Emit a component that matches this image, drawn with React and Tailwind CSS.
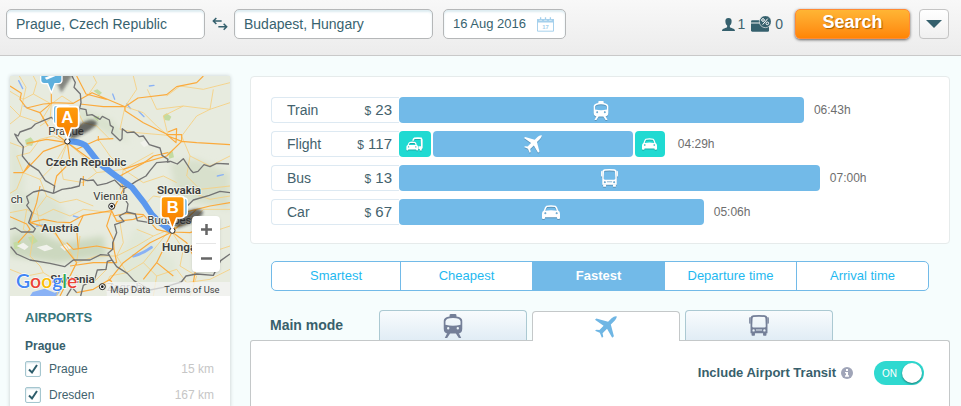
import React, { useState } from 'react';

const trips = [
    { name: 'Train', price: 23, time: '06:43h', legs: [{ icon: 'train', width: '76.4%' }] },
    {
        name: 'Flight',
        price: 117,
        time: '04:29h',
        legs: [
            { icon: 'transfer', width: '6%', transfer: true },
            { icon: 'plane', width: '37.7%' },
            { icon: 'taxi', width: '5.7%', transfer: true },
        ],
    },
    { name: 'Bus', price: 13, time: '07:00h', legs: [{ icon: 'bus', width: '79.4%' }] },
    { name: 'Car', price: 67, time: '05:06h', legs: [{ icon: 'car', width: '57.5%' }] },
];

const sortOptions = ['Smartest', 'Cheapest', 'Fastest', 'Departure time', 'Arrival time'];

const airports = [
    { name: 'Prague', distance: '15 km' },
    { name: 'Dresden', distance: '167 km' },
];

const TrainIcon = ({ className }) => (
    <svg viewBox="0 0 58 70" className={className} fill="currentColor" aria-hidden="true">
        <path fillRule="evenodd" d="M19 7V3Q19 0 23 0H35Q39 0 39 3V7Q56 9 56 20V43Q56 57 43 57H15Q2 57 2 43V20Q2 9 19 7ZM7 31Q29 37 51 31V22Q50 12 29 12Q8 12 7 22ZM15 38A3.500 3.500 0 1 0 15 45A3.500 3.500 0 1 0 15 38ZM43 38A3.500 3.500 0 1 0 43 45A3.500 3.500 0 1 0 43 38Z" />
        <path d="M13 54L21 56L12 70H5ZM45 54L37 56L46 70H53Z" />
    </svg>
);

const PlaneIcon = ({ className }) => (
    <svg viewBox="0 0 64 64" className={className} fill="currentColor" aria-hidden="true">
        <path d="M63 1C58 0 53 3 49 6L38 17L4 7L0 11L25 28L13 41L4 40L0 43L14 49L20 63L24 60L22 50L35 37L50 63L55 59L46 25L57 14C61 10 64 4 63 1Z" />
    </svg>
);

const BusIcon = ({ className }) => (
    <svg viewBox="0 0 58 62" className={className} fill="currentColor" aria-hidden="true">
        <path fillRule="evenodd" d="M12 1Q29 -1 46 1Q53 2 54 9V54H4V9Q5 2 12 1ZM13 6Q10 7 10 11L9 33Q9 37 13 37H45Q49 37 49 33L48 11Q48 7 45 6Q29 4 13 6ZM20 43V46H38V43ZM13 42A3.500 3.500 0 1 0 13 49A3.500 3.500 0 1 0 13 42ZM45 42A3.500 3.500 0 1 0 45 49A3.500 3.500 0 1 0 45 42Z" />
        <path d="M0 10Q0 6 4 6V26H2Q0 26 0 23ZM58 10Q58 6 54 6V26H56Q58 26 58 23ZM7 53H17V59Q17 61 15 61H9Q7 61 7 59ZM41 53H51V59Q51 61 49 61H43Q41 61 41 59Z" />
    </svg>
);

const CarIcon = ({ className }) => (
    <svg viewBox="0 0 54 42" className={className} fill="currentColor" aria-hidden="true">
        <path fillRule="evenodd" d="M13 2Q27 -1 41 2Q45 4 49 17Q54 19 54 26V39Q54 42 51 42H48Q45 42 45 39V37H9V39Q9 42 6 42H3Q0 42 0 39V26Q0 19 5 17Q9 4 13 2ZM15 6Q12 9 10 17Q27 14 44 17Q42 9 39 6Q27 4 15 6ZM10 22A3 3 0 1 0 10 28A3 3 0 1 0 10 22ZM44 22A3 3 0 1 0 44 28A3 3 0 1 0 44 22Z" />
    </svg>
);

const TransferIcon = ({ className }) => (
    <svg viewBox="0 0 52 42" className={className} fill="currentColor" aria-hidden="true">
        <path fillRule="evenodd" d="M25 1Q36 -1 48 1L51 8V34L48 36V41H42V36H38V28H46L45 6H26L24 11H19Q20 3 25 1Z" />
        <path fillRule="evenodd" d="M11 15Q20 12 28 15Q32 17 33 24Q37 26 37 30V38Q37 41 34 41Q31 41 31 38H7Q7 41 4 41Q1 41 1 38V30Q1 26 5 24Q7 17 11 15ZM12 18Q10 19 9 24H29Q28 19 26 18ZM8 28A2 2 0 1 0 8 32A2 2 0 1 0 8 28ZM30 28A2 2 0 1 0 30 32A2 2 0 1 0 30 28Z" />
    </svg>
);

const barIcons = {
    train: <TrainIcon className="h-[19px] w-4" />,
    plane: <PlaneIcon className="h-[18px] w-[18px]" />,
    bus: <BusIcon className="h-[18px] w-[17px]" />,
    car: <CarIcon className="h-[14px] w-[18px]" />,
    taxi: <CarIcon className="h-3 w-[15px]" />,
    transfer: <TransferIcon className="h-[14px] w-[17px]" />,
};

const modes = [
    { name: 'Train', icon: <TrainIcon className="h-6 w-5" /> },
    { name: 'Flight', icon: <PlaneIcon className="h-[22px] w-[22px]" /> },
    { name: 'Bus', icon: <BusIcon className="h-[21px] w-5" /> },
];

const fieldClass = 'h-[30px] rounded-[5px] border border-[#b5b7b8] bg-white text-[#38636f] shadow-[inset_0_2px_2px_rgba(120,180,200,0.25)]';

const SearchBar = () => (
    <header className="flex items-start border-b border-[#c9c9c9] bg-linear-to-b from-[#f8f8f8] to-[#ececec] pt-[9px] pr-3 pb-4 pl-1.5">
        <input aria-label="From" defaultValue="Prague, Czech Republic" className={`${fieldClass} w-[199px] px-[9px] text-[14px]`} />
        <button type="button" aria-label="Swap" className="mx-1.5 flex h-[30px] w-[17px] items-center justify-center text-[#35606d]">
            <svg viewBox="0 0 48 42" className="h-[14px] w-4" fill="none" stroke="currentColor" strokeWidth="4.5" aria-hidden="true">
                <path d="M13 3L4 12L13 21M4 12H29M35 20L44 29L35 38M44 29H19" />
            </svg>
        </button>
        <input aria-label="To" defaultValue="Budapest, Hungary" className={`${fieldClass} w-[199px] px-[9px] text-[14px]`} />
        <div className={`${fieldClass} ml-2.5 flex w-[123px] items-center pr-[11px] pl-[9px]`}>
            <input aria-label="Date" defaultValue="16 Aug 2016" className="min-w-0 flex-1 bg-transparent text-[13px]" />
            <svg viewBox="0 0 52 44" className="h-[15px] w-[17px] shrink-0" aria-hidden="true">
                <path d="M1.5 7V42.500H50.500V7Z" fill="#fff" stroke="#a5d0ec" strokeWidth="3" />
                <path d="M0 5H7V10H15V5H22V10H30V5H37V10H45V5H52V16H0Z" fill="#a5d0ec" />
                <path d="M9 0H13V8H9ZM24 0H28V8H24ZM39 0H43V8H39Z" fill="#a5d0ec" />
                <text x="26" y="35" textAnchor="middle" fontSize="18" fontWeight="700" fill="#a5d0ec">17</text>
            </svg>
        </div>
        <div className="ml-auto flex h-[30px] shrink-0 items-center text-[14px] text-[#41636e]">
            <svg viewBox="0 0 38 38" className="h-[13px] w-[13px]" fill="#35606d" aria-hidden="true">
                <path d="M19 0C26 0 29 4 28 11C28 17 25 20 23 22V26C25 30 38 29 38 38H0C0 29 13 30 15 26V22C13 20 10 17 10 11C9 4 12 0 19 0Z" />
            </svg>
            <span className="ml-0.5">1</span>
            <svg viewBox="0 0 60 48" className="ml-1.5 h-4 w-5" aria-hidden="true">
                <path d="M0 17Q0 13 4 13H50Q54 13 54 17V44Q54 47 50 47H4Q0 47 0 43Z" fill="#35606d" />
                <path d="M0 21H32" stroke="#f2f2f2" strokeWidth="3" />
                <circle cx="43" cy="17" r="18" fill="#35606d" stroke="#f2f2f2" strokeWidth="2" />
                <g fill="none" stroke="#fff" strokeWidth="3">
                    <circle cx="36" cy="12" r="4" />
                    <circle cx="49" cy="22" r="4" />
                    <path d="M50 8L35 26" />
                </g>
            </svg>
            <span className="ml-1">0</span>
        </div>
        <button type="button" className="ml-3 h-[30px] w-[115px] shrink-0 rounded-[5px] border border-[#ff8a35] bg-linear-to-b from-[#ffb534] to-[#ff8503] pb-1 text-[18px] leading-6 font-bold text-white shadow-[0_1px_3px_rgba(0,0,0,0.6)] [text-shadow:1px_1px_1px_#a86000]">
            Search
        </button>
        <button type="button" aria-label="More options" className="ml-[9px] flex h-[30px] w-[30px] shrink-0 items-center justify-center rounded border border-[#c4c4c4] bg-linear-to-b from-white to-[#f0f0f0]">
            <svg viewBox="0 0 16 8" className="h-2 w-4" fill="#35606d" aria-hidden="true">
                <path d="M0 0H16L8 8Z" />
            </svg>
        </button>
    </header>
);

const RouteMap = () => (
    <div className="relative">
        <svg viewBox="0 0 660 660" className="block w-full" fontFamily="Roboto, sans-serif" role="img" aria-label="Route map">
            <defs>
                <linearGradient id="pin" x1="0" y1="0" x2="0" y2="1">
                    <stop offset="0" stopColor="#ff9d0a" />
                    <stop offset="1" stopColor="#f57a00" />
                </linearGradient>
                <filter id="soft" x="-30%" y="-30%" width="160%" height="160%">
                    <feGaussianBlur stdDeviation="9" />
                </filter>
                <filter id="shade" x="-30%" y="-30%" width="160%" height="160%">
                    <feGaussianBlur stdDeviation="4" />
                </filter>
            </defs>
            <rect width="660" height="660" fill="#e7ebdf" />

            {/* terrain */}
            <g filter="url(#soft)">
                <path d="M0 180Q60 260 40 350T120 520L0 540Z" fill="#dfe6d5" />
                <path d="M0 480L80 470L160 500L280 480L290 540L140 560L0 540Z" fill="#ccd8bf" />
                <path d="M480 260L560 250L660 290V400L500 370Z" fill="#d8e0cc" />
                <path d="M190 90L300 130L360 200L290 170L210 130Z" fill="#d9e2cd" />
                <path d="M0 350L130 360L180 430L90 470L0 460Z" fill="#dce4d3" />
                <path d="M380 450L500 560L480 660H330L310 560Z" fill="#e1e8d8" />
            </g>
            <g fill="#c3dba2">
                <path d="M45 192L62 184L72 196L66 210L48 206ZM250 44L262 40L276 50L268 58ZM460 118L470 112L484 122L478 134L464 132ZM54 484L70 480L84 496L66 506ZM474 228L488 226L492 244L478 248ZM10 500L30 494L36 514L14 520ZM250 124L268 120L264 136Z" />
            </g>
            <g fill="#f1f2ec">
                <path d="M20 510L40 500L56 512L44 522ZM80 514L110 506L130 518L104 526ZM150 512L170 504L186 516L164 524ZM500 340L520 334L540 344L520 350ZM390 200L410 190L420 205L402 214Z" />
            </g>

            {/* lakes and rivers */}
            <g fill="none" stroke="#8ab2f5" strokeWidth="4" strokeLinecap="round">
                <path d="M26 14L38 38M308 54L314 70M350 84L362 98M386 106L402 122M418 30L432 28M42 90L54 96M80 450L104 446M190 420L206 424M622 300L640 296" />
                <path d="M370 540Q400 532 424 514" strokeWidth="9" />
            </g>
            <path d="M60 660L68 648L104 638L134 650L152 644L140 660Z" fill="#8ab2f5" />

            {/* secondary roads */}
            <g fill="none" stroke="#f7cf7d" strokeWidth="2.5" strokeLinejoin="round">
                <path d="M0 46L40 70L70 54L124 84L156 60L190 82M28 0L48 34L40 70L30 120L0 144M70 54L80 20L70 0M124 84L120 130L90 150M232 60L260 20L250 0M345 92L380 40L370 0M345 92L330 160L380 170L474 178M345 92L400 110L440 150L474 178M470 60L510 30L580 40L660 20M474 178L460 120L520 90L600 100L660 80M515 180L560 120L600 100L610 40M515 180L540 240L600 270L660 240M540 240L530 300L570 340L660 330M412 40L440 100L520 90M0 90L30 120L90 140L124 84" />
                <path d="M20 240L60 230L90 190L130 180L170 200M20 240L40 290L90 310L130 270L172 200M40 290L20 340L0 352M172 200L150 260L160 310L220 320L260 290M172 200L230 250L260 290L340 280L430 230M265 190L300 240L340 280L330 340M172 200L220 140L260 150L300 190M200 100L220 140M90 310L110 360L150 380L200 370L250 390M110 360L80 400L90 450L130 470M340 280L400 320L460 300L500 320M0 200L40 215L90 190" />
                <path d="M0 410L50 400L90 420L130 400L180 420L220 400L300 410M50 400L40 460L70 480L60 540M130 470L170 510L200 560L180 600M300 410L330 440L340 500L320 540M200 560L260 540L320 540L380 510L430 480L480 460M210 480L200 560M320 540L350 590L400 560L440 600L430 660M350 590L300 600L280 640M440 600L500 580L530 620L600 610L660 580M480 460L520 520L510 570L560 600L540 660M480 460L440 510L400 560M480 460L540 440L600 470L660 450M540 440L580 400L660 400M400 390L430 360L490 370L520 340L600 370L660 360M400 390L440 420L480 460M380 460L430 480M0 580L50 600L100 590L150 620L200 600L250 620L290 580M150 620L140 660M60 540L90 570L100 590M520 520L600 530L660 510" />
            </g>

            {/* motorways */}
            <g fill="none" stroke="#fbaa3c" strokeWidth="3.5" strokeLinejoin="round">
                <path d="M0 30L34 52L30 70L50 96L100 84L126 82M124 0V84M126 80L90 110L50 96M125 80L190 82L246 50L345 92L384 66L470 56L500 32L560 20L580 0M200 0L228 54L290 70M345 92L280 92L210 84M345 92V104L400 140L440 160L474 176M474 168L500 158L498 200L470 176H515V196L474 180M515 196L560 200L660 206M515 196L470 240L400 260L340 280" />
                <path d="M172 200L120 160L90 110M172 200L110 190L50 202M172 200L100 226L40 290L10 290M172 200L200 220L266 190L310 188M172 200L180 260L140 300L132 336M172 200L240 250L330 300M265 180V195M330 300L400 262L430 240L474 230M330 300L340 340L310 400M40 290L60 260M220 330L220 300" />
                <path d="M0 422L50 444L60 460L24 500M60 440L100 430L140 438L180 440L220 418L305 404L320 436L370 430L400 420M60 440L130 460L160 510L200 560M305 404L290 450L310 490L312 520L260 510L190 520L170 500M220 418L200 460L205 520M312 520L320 560L250 560L180 570M310 420L350 412L400 416L440 460L480 470M486 468L520 410L600 390L660 380M486 468L560 400M486 468L420 500L340 560L300 610L250 640L200 650M486 468L440 560L400 610M486 468L530 500L560 560L550 620M486 468L540 470L600 450M440 560L490 600M90 330L80 380L60 440M250 640L300 610L330 660M200 560L170 620L150 660" />
            </g>

            {/* country borders */}
            <g fill="none" stroke="#747474" strokeWidth="4" strokeLinejoin="round">
                <path d="M186 0L196 20L192 34L211 54L213 80L209 97L228 101L231 118L246 116L270 130L277 121L298 132L301 148L310 154L305 170L330 194L336 188L337 158L352 170L372 168L388 182L400 180L418 206L450 216L456 238L474 250L472 258L482 256" />
                <path d="M209 97L204 115L180 121L130 130L124 124L100 134L76 144L64 156L30 168L24 180L14 174L26 196L40 212L37 240L58 266L86 284L106 314L134 330L130 352" />
                <path d="M482 256L502 264L520 248L542 282L550 290L564 286L582 266L600 272L620 262L657 264" />
                <path d="M482 256L440 260L420 284L408 300L378 316L360 328L342 338L340 362L354 384L350 408" />
                <path d="M130 352L156 340L184 336L208 330L212 308L232 314L250 312L262 328L290 322L314 312L334 332L360 328" />
                <path d="M350 408L376 414L382 434L420 440L450 430L490 410L528 394L550 372L598 358L630 346L660 350" />
                <path d="M350 408L328 420L342 436L314 446L320 470L308 500L308 520L294 532L306 552" />
                <path d="M300 538L272 536L240 552L190 552L164 572L120 562L60 552L20 534L2 512" />
                <path d="M130 352L96 342L70 348L50 362L56 380L50 388L66 410L56 440L76 458L70 468L34 468L16 456L0 460" />
                <path d="M306 552L292 556L288 580L262 582L254 610L220 628L212 660M306 552L320 572L352 592L372 614L420 642L460 634L514 618L528 600L560 594L610 598L632 554L660 534" />
                <path d="M170 660L186 634L200 650" />
            </g>

            {/* travel route */}
            <path d="M172 196Q206 196 226 208L268 262L318 300L366 334L402 380L426 416L450 440L484 464" fill="none" stroke="#5b98ee" strokeWidth="18" strokeLinejoin="round" />

            {/* place names */}
            <g fill="#3c3c3c" stroke="#eff2e8" strokeWidth="6" paintOrder="stroke" strokeLinejoin="round">
                <g fontSize="34">
                    <text x="115" y="176">Prague</text>
                    <text x="250" y="371">Vienna</text>
                    <text x="2" y="380">ch</text>
                    <text x="412" y="443">Budapest</text>
                    <text x="290" y="645" fill="#8a8a8a">Zagreb</text>
                </g>
                <g fontSize="35" fontWeight="600">
                    <text x="107" y="270">Czech Republic</text>
                    <text x="441" y="353">Slovakia</text>
                    <text x="94" y="468">Austria</text>
                    <text x="456" y="526">Hungary</text>
                    <text x="121" y="620">Slovenia</text>
                </g>
            </g>
            <g fill="#fff" stroke="#222" strokeWidth="3">
                <circle cx="305" cy="391" r="9" />
                <circle cx="277" cy="632" r="9" />
                <circle cx="172" cy="196" r="8" />
                <circle cx="487" cy="464" r="8" />
            </g>
            <g fill="#111">
                <circle cx="305" cy="391" r="4" />
                <circle cx="277" cy="632" r="4" />
            </g>

            {/* airport markers and pins */}
            <path d="M176 180L205 146Q250 120 262 142Q250 162 190 188ZM490 448L520 410Q570 388 580 410Q570 432 505 456Z" fill="#222" opacity="0.65" filter="url(#shade)" />
            <path d="M128 -10H184Q188 -10 186 0L154 50Z" fill="#222" opacity="0.5" filter="url(#shade)" />
            <path d="M92 -6V12Q92 22 102 23H113L124 50L135 23H146Q156 22 156 12V-6Z" fill="#5eb0dd" stroke="#fff" strokeWidth="4" />
            <path d="M104 5L110 11L146 -4H128Z" fill="#fff" />
            <rect x="130" y="88" width="50" height="56" rx="9" fill="#71b9e3" stroke="#fff" strokeWidth="4" />
            <rect x="480" y="366" width="52" height="54" rx="9" fill="#71b9e3" stroke="#fff" strokeWidth="4" />
            <g fill="url(#pin)" stroke="#fff" strokeWidth="5" strokeLinejoin="round">
                <path d="M147 92H197Q206 92 206 101V147Q206 156 197 156H184L173 190L160 156H147Q138 156 138 147V101Q138 92 147 92Z" />
                <path d="M462 361H514Q523 361 523 370V417Q523 426 514 426H500L487 460L475 426H462Q453 426 453 417V370Q453 361 462 361Z" />
            </g>
            <g fill="#fff" fontFamily="'Liberation Sans', Arial, sans-serif" fontSize="50" fontWeight="700" textAnchor="middle">
                <text x="172" y="142">A</text>
                <text x="488" y="411">B</text>
            </g>

            <rect x="290" y="618" width="370" height="42" fill="#f5f5f5" opacity="0.7" />
            <g fontSize="28" fill="#444">
                <text x="301" y="651">Map Data</text>
                <text x="463" y="651">Terms of Use</text>
            </g>
            <text x="18" y="636" fontFamily="Lato, sans-serif" fontSize="58" fontWeight="600" stroke="#fff" strokeWidth="4" paintOrder="stroke" fill="#4285f4">
                G<tspan fill="#ea4335">o</tspan><tspan fill="#fbbc05">o</tspan><tspan fill="#4285f4">g</tspan><tspan fill="#34a853">l</tspan><tspan fill="#ea4335">e</tspan>
            </text>
        </svg>
        <div className="absolute right-2.5 bottom-6 flex w-7 flex-col divide-y divide-[#e6e6e6] rounded-sm bg-white px-1 shadow-sm">
            <button type="button" aria-label="Zoom in" className="flex h-7 items-center justify-center">
                <svg viewBox="0 0 11 11" className="size-[11px]" stroke="#666" strokeWidth="2.5" aria-hidden="true">
                    <path d="M0 5.500H11M5.500 0V11" />
                </svg>
            </button>
            <button type="button" aria-label="Zoom out" className="flex h-7 items-center justify-center">
                <svg viewBox="0 0 11 11" className="size-[11px]" stroke="#666" strokeWidth="2.5" aria-hidden="true">
                    <path d="M0 5.500H11" />
                </svg>
            </button>
        </div>
    </div>
);

const Sidebar = () => (
    <aside className="w-[220px] shrink-0 bg-white shadow-[0_0_4px_rgba(0,0,0,0.2)]">
        <RouteMap />
        <div className="pt-3 pr-4 pl-[15px]">
            <h2 className="text-[13px] leading-5 font-bold text-[#37757c]">AIRPORTS</h2>
            <h3 className="mt-2 text-[12px] leading-5 font-bold text-[#38606c]">Prague</h3>
            <ul>
                {airports.map(airport => (
                    <li key={airport.name} className="flex h-[26px] items-center text-[12px]">
                        <label className="flex items-center gap-2 text-[#42636e]">
                            <span className="grid size-4">
                                <input type="checkbox" defaultChecked className="peer col-start-1 row-start-1 size-4 appearance-none rounded-[2px] border border-[#a5c6cf] bg-white shadow-[inset_0_1px_2px_rgba(120,170,190,0.4)]" />
                                <svg viewBox="0 0 16 16" className="pointer-events-none invisible col-start-1 row-start-1 size-4 peer-checked:visible" fill="none" stroke="#2e5d6b" strokeWidth="2" aria-hidden="true">
                                    <path d="M4 8.500L7 11.500L12 4" />
                                </svg>
                            </span>
                            {airport.name}
                        </label>
                        <span className="ml-auto text-[#c6c6c6]">{airport.distance}</span>
                    </li>
                ))}
            </ul>
        </div>
    </aside>
);

const TripRow = ({ trip }) => (
    <li className="flex h-[26px]">
        <div className="flex w-32 shrink-0 items-center justify-between rounded-l-[4px] border border-r-0 border-[#dde9f2] pr-[7px] pl-[15px] text-[#43626d]">
            <span className="text-[14px]">{trip.name}</span>
            <span className="text-[15px]"><span className="text-[12px]">$</span> {trip.price}</span>
        </div>
        <div className="flex min-w-0 flex-1 items-center gap-0.5">
            {trip.legs.map((leg, i) => (
                <div
                    key={i}
                    className={`flex h-full shrink-0 items-center justify-center rounded-[4px] text-white ${leg.transfer ? 'bg-[#20dad2]' : 'bg-[#72bae8]'}`}
                    style={{ width: leg.width }}
                >
                    <span className="drop-shadow-[0_1px_0_rgba(0,0,0,0.2)]">{barIcons[leg.icon]}</span>
                </div>
            ))}
            <span className={`text-[12px] text-[#6e6e6e] ${trip.legs.length > 1 ? 'pl-[11px]' : 'pl-2'}`}>{trip.time}</span>
        </div>
    </li>
);

const App = () => {
    const [sort, setSort] = useState('Fastest');
    const [mode, setMode] = useState('Flight');
    const [transit, setTransit] = useState(true);

    return (
        <div className="flex min-h-screen flex-col bg-[#f6fdfd] font-['Liberation_Sans',Arial,sans-serif]">
            <SearchBar />
            <div className="flex flex-1 gap-5 pt-5 pr-[11px] pl-2.5">
                <Sidebar />
                <main className="flex min-w-0 flex-1 flex-col">
                    <ul className="flex flex-col gap-2 rounded-[4px] border border-[#e6ebeb] bg-white px-5 pt-5 pb-[18px]">
                        {trips.map(trip => <TripRow key={trip.name} trip={trip} />)}
                    </ul>

                    {/* Sort order */}
                    <div className="mx-[21px] mt-[17px] flex h-[30px] divide-x divide-[#72bae8] overflow-hidden rounded-[5px] border border-[#72bae8] bg-white">
                        {sortOptions.map(option => (
                            <button
                                key={option}
                                type="button"
                                onClick={() => setSort(option)}
                                className={`w-1/5 text-[13px] first:w-[129px] not-first:flex-1 ${sort === option ? 'bg-[#72bae8] font-bold text-white' : 'text-[#1fb9f0]'}`}
                            >
                                {option}
                            </button>
                        ))}
                    </div>

                    {/* Main mode tabs */}
                    <div className="mt-[19px] flex items-end pl-5">
                        <span className="w-[109px] pb-[5px] text-[14px] leading-5 font-bold text-[#38606c]">Main mode</span>
                        <div className="flex items-end gap-[5px]" role="tablist">
                            {modes.map(item => (
                                <button
                                    key={item.name}
                                    type="button"
                                    role="tab"
                                    aria-label={item.name}
                                    aria-selected={mode === item.name}
                                    onClick={() => setMode(item.name)}
                                    className={`flex h-[30px] w-[148px] items-center justify-center rounded-t-[4px] border border-b-0 ${
                                        mode === item.name
                                            ? 'z-10 -mb-px border-[#c4c8c9] bg-white text-[#6fb6e4]'
                                            : 'border-[#abc9d2] bg-linear-to-b from-[#f8fbfd] to-[#e1edf5] text-[#747f98]'
                                    }`}
                                >
                                    {item.icon}
                                </button>
                            ))}
                        </div>
                    </div>
                    <section className="flex flex-1 items-start justify-end rounded-t-[3px] border border-b-0 border-[#c4c8c9] bg-white pt-5 pr-[25px]">
                        <label htmlFor="transit" className="text-[13px] leading-6 font-bold text-[#38606c]">Include Airport Transit</label>
                        <svg viewBox="0 0 36 36" className="mt-1.5 ml-[5px] size-3" aria-hidden="true">
                            <circle cx="18" cy="18" r="18" fill="#a0a5b8" />
                            <path d="M15 6H21V12H15ZM12 15H21V25H24V29H12V25H15V19H12Z" fill="#fff" />
                        </svg>
                        <label className={`relative ml-[21px] flex h-6 w-[50px] cursor-pointer items-center rounded-full ${transit ? 'bg-[#2fd9d0]' : 'bg-gray-300'}`}>
                            <input id="transit" type="checkbox" checked={transit} onChange={e => setTransit(e.target.checked)} className="absolute inset-0 size-full appearance-none rounded-full" />
                            <span className="pl-2 text-[10px] text-white">{transit ? 'ON' : 'OFF'}</span>
                            <span className={`absolute top-0.5 size-5 rounded-full bg-white shadow-[0_1px_2px_rgba(0,0,0,0.45)] ${transit ? 'right-0.5' : 'left-0.5'}`} />
                        </label>
                    </section>
                </main>
            </div>
        </div>
    );
};

export default App;
